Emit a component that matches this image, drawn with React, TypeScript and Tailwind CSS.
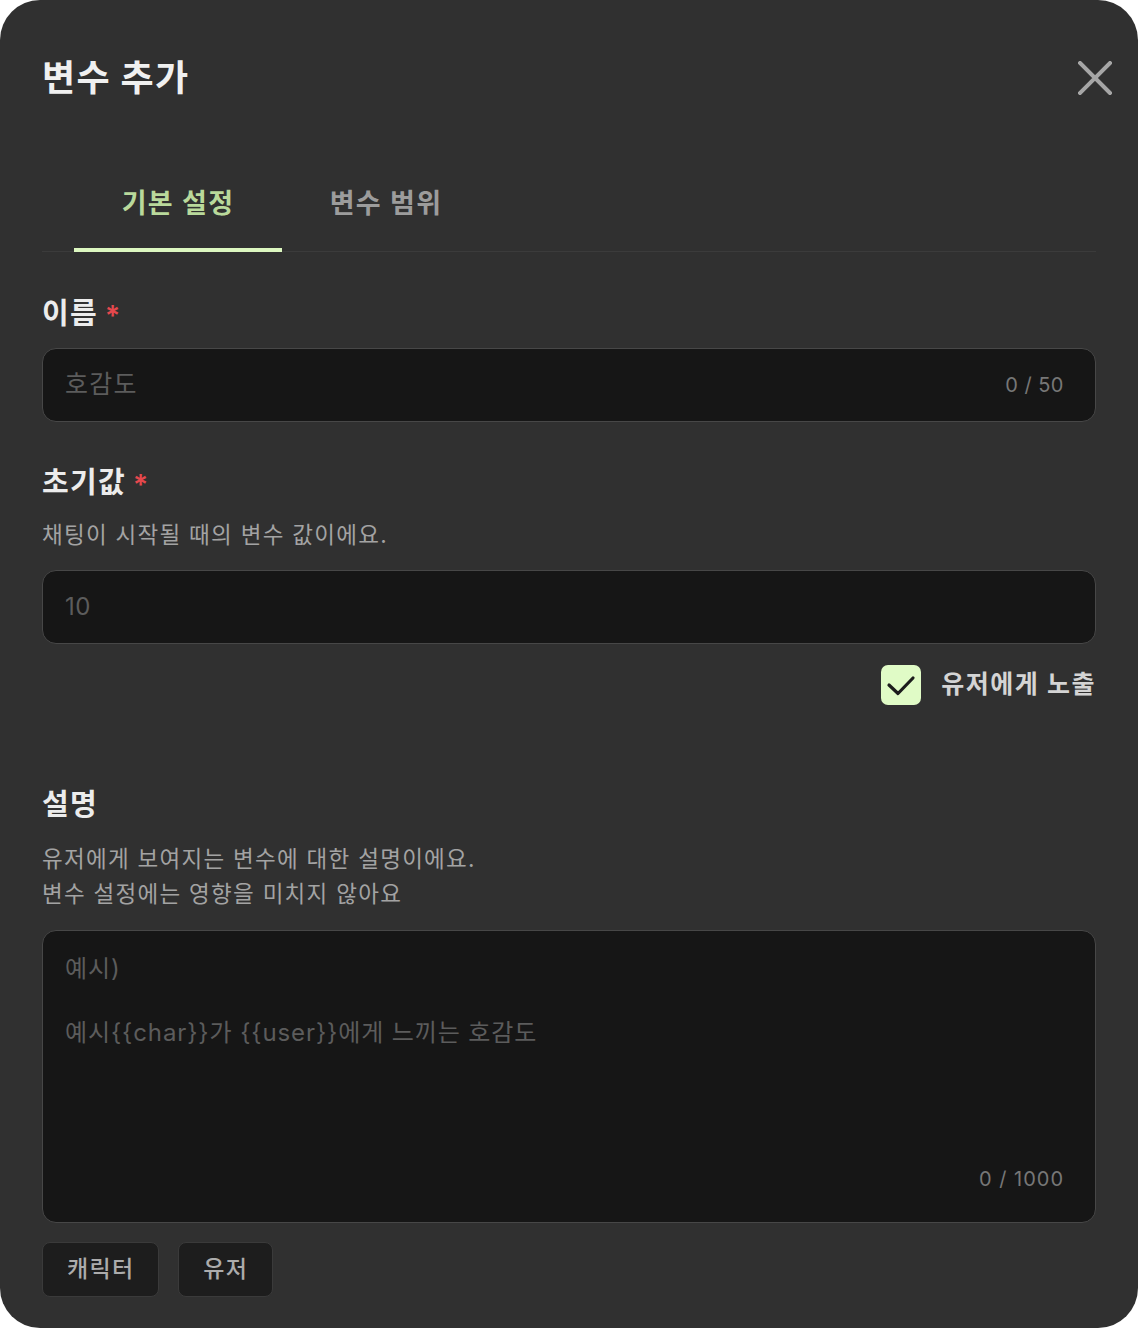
const font = { fontFamily: '"Inter", "Noto Sans CJK KR", sans-serif' };

const Required = () => <span className="ml-[7px] text-[#e5484d] text-[28px] leading-none self-start mt-[6px]">*</span>;

const App = () => {
  return (
    <div className="w-[1138px] h-[1328px] bg-white tracking-[0.08em]" style={font}>
      <div className="w-full h-full bg-[#303030] rounded-[40px] px-[42px] pt-[48px] flex flex-col">
        {/* header */}
        <div className="flex items-center justify-between h-[60px]">
          <h2 className="text-[36px] font-bold text-[#f0f0f0]">변수 추가</h2>
          <button className="w-[34px] h-[34px] -mr-4 flex items-center justify-center">
            <svg width="34" height="34" viewBox="0 0 34 34">
              <path d="M2 2 L32 32 M32 2 L2 32" stroke="#a6a6a6" strokeWidth="4" strokeLinecap="square" />
            </svg>
          </button>
        </div>

        {/* tabs */}
        <div className="mt-[78px] flex border-b border-[#3b3b3b] px-8">
          <button className="w-[208px] pb-[26px] border-b-4 border-[#dcf7c0] -mb-px text-[27px] font-semibold text-[#b9d99b] leading-[36px]">
            기본 설정
          </button>
          <button className="w-[208px] pb-[26px] border-b-4 border-transparent -mb-px text-[27px] font-semibold text-[#9c9c9c] leading-[36px]">
            변수 범위
          </button>
        </div>

        {/* name */}
        <div className="mt-[44px] text-[29px] font-semibold text-[#ececec] leading-[36px] flex">
          이름<Required />
        </div>
        <div className="mt-[16px] h-[74px] rounded-[14px] bg-[#161616] border border-[#474747] flex items-center justify-between pl-[22px] pr-[31px]">
          <span className="text-[25px] text-[#5c5c5c]">호감도</span>
          <span className="text-[20px] text-[#777777] tracking-[0.5px]">0 / 50</span>
        </div>

        {/* initial value */}
        <div className="mt-[43px] text-[29px] font-semibold text-[#ececec] leading-[36px] flex">
          초기값<Required />
        </div>
        <p className="mt-[18px] text-[22.5px] text-[#a3a3a3] leading-[32px]">채팅이 시작될 때의 변수 값이에요.</p>
        <div className="mt-[19px] h-[74px] rounded-[14px] bg-[#161616] border border-[#474747] flex items-center pl-[22px]">
          <span className="text-[24px] text-[#5c5c5c] tracking-[0.5px]">10</span>
        </div>

        <label className="mt-[21px] self-end flex items-center gap-[20px]">
          <span className="w-[40px] h-[40px] rounded-[7px] bg-[#e0fbc6] flex items-center justify-center">
            <svg width="40" height="40" viewBox="0 0 40 40">
              <path d="M8 20 L17 28.5 L32 13" fill="none" stroke="#1c1c1c" strokeWidth="3.2" strokeLinecap="round" strokeLinejoin="round" />
            </svg>
          </span>
          <span className="text-[25px] font-semibold text-[#d4d4d4] tracking-[0.06em]">유저에게 노출</span>
        </label>

        {/* description */}
        <div className="mt-[82px] text-[29px] font-semibold text-[#ececec] leading-[36px]">설명</div>
        <p className="mt-[18px] text-[22.5px] text-[#a3a3a3] leading-[35px]">
          유저에게 보여지는 변수에 대한 설명이에요.
          <br />
          변수 설정에는 영향을 미치지 않아요
        </p>
        <div className="mt-[19px] h-[293px] rounded-[14px] bg-[#161616] border border-[#474747] flex flex-col justify-between pl-[22px] pr-[31px] pt-[22px] pb-[28px]">
          <div className="text-[24px] leading-[32px] text-[#5c5c5c] tracking-[0.9px]">
            <p>예시)</p>
            <p className="mt-[32px]">예시{"{{char}}"}가 {"{{user}}"}에게 느끼는 호감도</p>
          </div>
          <span className="self-end text-[20px] text-[#777777] tracking-[1px]">0 / 1000</span>
        </div>

        <div className="mt-[19px] flex gap-[19px]">
          <button className="h-[55px] px-[24px] rounded-[8px] bg-[#1d1d1d] border border-[#3a3a3a] text-[23px] font-medium text-[#acacac]">캐릭터</button>
          <button className="h-[55px] px-[24px] rounded-[8px] bg-[#1d1d1d] border border-[#3a3a3a] text-[23px] font-medium text-[#acacac]">유저</button>
        </div>
      </div>
    </div>
  );
};

export default App;
